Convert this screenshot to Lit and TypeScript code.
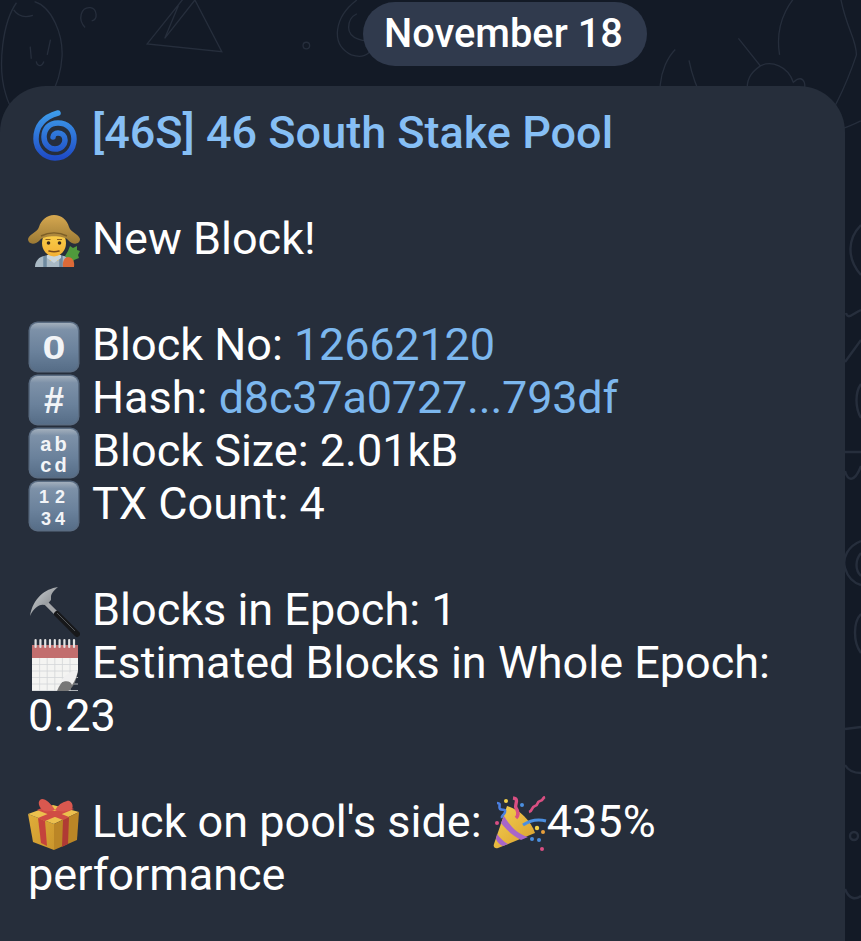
import { LitElement, html, css, svg } from "lit";
import { customElement } from "lit/decorators.js";

const cyclone = svg`<svg class="e" viewBox="0 0 52 52">
<defs><linearGradient id="cg" x1="0" y1="0" x2="0" y2="1"><stop offset="0" stop-color="#3d9bea"/><stop offset="1" stop-color="#1f4cc6"/></linearGradient></defs>
<path d="M30 4C16 8 8 17 8 30c0 11 9 19 19 19 11 0 19-8 19-19 0-10-7-16-16-16-9 0-14 6-14 14 0 7 5 12 11 12 6 0 10-4 10-9 0-4-3-7-7-7-3 0-5 2-5 4" fill="none" stroke="url(#cg)" stroke-width="5.500" stroke-linecap="round"/></svg>`;

const farmer = svg`<svg class="e" viewBox="0 0 52 52">
<defs><linearGradient id="hat" x1="0" y1="0" x2="0" y2="1"><stop offset="0" stop-color="#d6a850"/><stop offset="1" stop-color="#9b7a35"/></linearGradient>
<linearGradient id="fc" x1="0" y1="0" x2="0" y2="1"><stop offset="0" stop-color="#fbd54e"/><stop offset="1" stop-color="#f3b034"/></linearGradient></defs>
<path d="M7 52c0-6 4-10 9-11l10-2 10 2c5 1 7 5 7 11z" fill="#a9b9c4"/>
<path d="M17 41v11M33 41v11" stroke="#6f8aa0" stroke-width="3.500"/>
<path d="M20 40h12l-2 6h-8z" fill="#edb73e"/>
<path d="M19 43l7 5 7-5 0-3-14 0z" fill="#c9d5dc"/>
<ellipse cx="26" cy="28" rx="12" ry="13.500" fill="url(#fc)"/>
<circle cx="20.500" cy="28" r="1.800" fill="#3a2a1a"/><circle cx="31.500" cy="28" r="1.800" fill="#3a2a1a"/>
<path d="M17.500 24.500h5M29 24.500h5" stroke="#8a5f20" stroke-width="1.200"/>
<path d="M21 36q5 1.500 10 0" fill="none" stroke="#7a4a1a" stroke-width="1.600" stroke-linecap="round"/>
<path d="M0 24C2 18 9 18 11 12 13 5 19 0 26 0 34 0 39 5 41 12 43 18 50 18 52 24 52 30 44 30 40 25 36 20 16 20 12 25 8 30 0 30 0 24z" fill="url(#hat)"/>
<path d="M13 21c8-4 18-4 26 0" fill="none" stroke="#7d5f27" stroke-width="1.600"/>
<path d="M37 41l3-5 2-5 3 2 4-2 0 4 3 1-2 4 1 3-5 2-2 4z" fill="#4f9a3c"/>
<path d="M35 52c-1-6 2-10 5-10 4 0 7 4 6 10z" fill="#dc6a38"/></svg>`;

const cap = (inner: unknown) => svg`<svg class="e" viewBox="0 0 52 52">
<defs><linearGradient id="kc" x1="0" y1="0" x2="0" y2="1"><stop offset="0" stop-color="#a3afbc"/><stop offset=".14" stop-color="#7d91a8"/><stop offset=".6" stop-color="#6a819b"/><stop offset="1" stop-color="#566d87"/></linearGradient></defs>
<rect x=".5" y=".5" width="51" height="51" rx="9" fill="#5a6c82"/>
<rect x="2" y="2" width="48" height="48" rx="8" fill="url(#kc)"/>${inner}</svg>`;

const keyStyle = "font-family:'Liberation Sans',sans-serif;font-weight:700;fill:#f2f4f7";
const zero = cap(svg`<text x="0" y="0" transform="translate(26 38) scale(1.250 1)" text-anchor="middle" font-size="33" style=${keyStyle}>0</text>`);
const hash = cap(svg`<text x="26" y="39" text-anchor="middle" font-size="36" style=${keyStyle}>#</text>`);
const abcd = cap(svg`<text x="27" y="24" text-anchor="middle" font-size="20" letter-spacing="3" style=${keyStyle}>ab</text><text x="27" y="45" text-anchor="middle" font-size="20" letter-spacing="3" style=${keyStyle}>cd</text>`);
const nums = cap(svg`<text x="27" y="23" text-anchor="middle" font-size="18" letter-spacing="6" style=${keyStyle}>12</text><text x="27" y="45" text-anchor="middle" font-size="18" letter-spacing="4" style=${keyStyle}>34</text>`);

const pick = svg`<svg class="e" viewBox="0 0 52 52">
<defs><linearGradient id="pk" x1="0" y1="0" x2="1" y2="1"><stop offset="0" stop-color="#d2d6d9"/><stop offset="1" stop-color="#6f7377"/></linearGradient></defs>
<path d="M18 17L30 29" stroke="#a4a6a9" stroke-width="4.500"/>
<path d="M29 28L49 48" stroke="#17181a" stroke-width="6" stroke-linecap="round"/>
<path d="M29 27L47 45" stroke="#55575a" stroke-width="1"/>
<path d="M30 1C17 3 5 12 2 30c4-8 9-12 14-11l3-.5 4-4.500 0-3C23 8 26 4 30 1z" fill="url(#pk)"/></svg>`;

const rings = [0,1,2,3,4,5,6,7,8].map(i => svg`<rect x="${6.5 + i*4.8}" y="0" width="2.200" height="9" rx="1.100" fill="#e2e2e2"/>`);
const grid = [1,2,3,4,5].map(i => svg`<path d="M${4+i*7.600} 19V52M4 ${19+i*6.500}H50" stroke="#d3d6d8" stroke-width=".8"/>`);
const cal = svg`<svg class="e" viewBox="0 0 52 52">
<rect x="4" y="6" width="46" height="13" fill="#c26e6e"/>
<path d="M4 19h46v14L30 52H4z" fill="#f4f4f2"/>${grid}
<path d="M50 31c-9 3-17 11-21 21h11c5-3 9-11 10-21z" fill="#777"/>
<path d="M50 31c-8 1-15 6-18 13 6-3 11-2 12 2 3-4 5-9 6-15z" fill="#f0f0f0"/>${rings}</svg>`;

const gift = svg`<svg class="e" viewBox="0 0 52 52">
<defs><linearGradient id="gl" x1="0" y1="0" x2="1" y2="1"><stop offset="0" stop-color="#e0ad3a"/><stop offset="1" stop-color="#cb962c"/></linearGradient></defs>
<path d="M0 16l26 10v26L5 44z" fill="url(#gl)"/>
<path d="M0 16L25 7l26 7-25 12z" fill="#ecc04e"/>
<path d="M26 26l25-12-2 28-23 10z" fill="#bb8626"/>
<path d="M10 20l7 3 2 25-6-3z" fill="#c4433c"/>
<path d="M35 22l6-3-1 27-6 3z" fill="#b03a34"/>
<path d="M9 12L35 22l6-3L16 9z" fill="#d04c44"/>
<path d="M39 8L10 20l7 3 29-12z" fill="#d04c44"/>
<path d="M27 12C22 4 15 -1 12 2c-3 3 0 9 4 11 3 1 7 0 11-1 5 2 13 2 17-1 2-4-1-9-5-8-5 1-9 4-12 9z" fill="#d9584f"/></svg>`;

const party = svg`<svg class="e p" viewBox="0 0 56 56">
<defs><linearGradient id="cn" x1="0" y1="0" x2="1" y2="1"><stop offset="0" stop-color="#f4d052"/><stop offset="1" stop-color="#d99f2c"/></linearGradient></defs>
<path d="M14 10L1 48c-1 3 1 5 4 4l37-15c-4-12-16-24-28-27z" fill="url(#cn)"/>
<path d="M11 20c6 10 13 18 24 21l-7 3C18 39 12 32 8 27zM4 38c3 4 7 8 11 10l-5 2c-3-1-6-4-7-7z" fill="#a866c8"/>
<path d="M4 7c5 0 1 4 3 6s6-1 5 3-4 3-3 6" fill="none" stroke="#4b7fe0" stroke-width="2.600"/>
<path d="M20 2c7 1 1 7 3 10s3 7 0 10" fill="none" stroke="#d94f82" stroke-width="3.400"/>
<path d="M36 16c4-1 2-5 6-6s1-4 5-5 2-3 5-4" fill="none" stroke="#d94f82" stroke-width="2.800"/>
<path d="M30 29c6-4 15-6 23-4" fill="none" stroke="#4b8fe0" stroke-width="3"/>
<g><circle cx="13" cy="5" r="2" fill="#f2d04a"/><circle cx="29" cy="9" r="2" fill="#4b8fe0"/><circle cx="4" cy="27" r="2" fill="#d94f82"/>
<circle cx="44" cy="32" r="2.200" fill="#f2d04a"/><circle cx="50" cy="36" r="2" fill="#e9a03c"/><circle cx="39" cy="43" r="2" fill="#4b8fe0"/><circle cx="46" cy="44" r="2" fill="#4b8fe0"/><circle cx="49" cy="53" r="2" fill="#d94f82"/></g></svg>`;

@customElement("app-root")
export class AppRoot extends LitElement {
  static styles = css`
    :host { display: block; width: 861px; height: 941px; overflow: hidden; position: relative; background: #131a26;
      font-family: Roboto, sans-serif; color: #fff; }
    .doodles { position: absolute; inset: 0; width: 861px; height: 941px; fill: none; stroke: #262e3c; stroke-width: 2.400; }
    .page { position: relative; display: flex; flex-direction: column; padding-top: 2px; }
    .date { align-self: flex-start; margin-left: 363px; height: 64px; line-height: 63px; padding: 0 24px 0 21px; border-radius: 32px; background: #303a4d; font-size: 39.800px; font-weight: 500; }
    .bubble { margin: 20px 16px 0 0; height: 900px; box-sizing: border-box; padding: 20px 40px 0 28px;
      background: #262e3b; border-radius: 46px 46px 0 0; font-size: 45px; line-height: 53px; }
    .title { color: #86bff5; font-weight: 500; }
    .link { color: #7cb7ee; letter-spacing: -.2px; }
    .gap { height: 53px; }
    .e { display: inline-block; width: 52px; height: 52px; vertical-align: -1px; margin: -12px 12px -12px 0; }
    .p { width: 56px; height: 56px; margin-right: -2px; vertical-align: -3px; }
  `;

  render() {
    return html`
      <svg class="doodles" viewBox="0 0 861 941">
        <g transform="scale(.549)">
          <path d="M30 5C5 40-5 120 10 170c8 30 25 50 38 48 30-8 62-60 65-115 2-40-18-90-50-100"/>
          <path d="M25 18c8 12 22 14 35 10M55 85l2 22M92 72l-6 28M66 112c2 10 10 10 14 0M48 218c-12 10-18 18-8 28 -2 14-4 20-4 30"/>
          <path d="M155 50c-14-14-8-38 10-36 12 2 14 22 2 24"/>
          <path d="M340-10L268 80l136 14L355 0 300 70l25-60"/>
          <circle cx="558" cy="83" r="6"/><circle cx="355" cy="212" r="6"/>
          <path d="M135 260c20-40 60-90 100-94 30 0 16 60 0 94"/>
          <path d="M478 258c-20-30-14-80 10-88 22-6 24 40 4 50-10 2-10-16-2-20"/>
          <path d="M560 260c10-30 20-60 30-75 14 25 24 50 26 75"/>
          <path d="M650 0c-40 30-50 80-10 100 30 10 40-10 45-30-20 10-50 0-50-20 0-10 5-20 15-25"/>
          <path d="M815 200l20 60M880 190c20 20 40 50 50 70M840 200c0 20 10 30 20 20"/>
          <path d="M1045 195c-6 20 10 40 30 65M1135 205c-4 25-20 40-25 55M1045 210c30 8 60 6 70-5"/>
          <path d="M1230 90c-30 30-40 100-8 120 20 10 50 4 66-20M1255 110c10 50 40 110 70 140"/>
          <path d="M1345 70l40 50c20-10 50 0 60 30 20-20 30 10 10 30-6 30-40 60-70 50-20-4-30-10-36-24-14-2-12-20 0-24-14-14-2-30 12-22 0-20 10-30 24-40"/>
          <path d="M1400 195v30M1436 200l2 26"/>
          <path d="M1420 100c-10-60 20-110 60-130M1530 -10c10 60 30 80 30 110-20 60-50 120-70 140 30 0 50-6 78-20"/>
        </g>
        <path d="M861 225C848 238 846 258 861 275M845 362L861 340M861 310C852 314 848 320 846 313M861 384C855 392 855 408 861 418"/>
        <path d="M845 452H861M845 471C848 482 855 482 861 466M861 541C848 546 842 558 845 568 848 578 854 583 861 585M861 553C855 560 855 570 861 576"/>
        <path d="M861 614C853 622 853 642 861 653M845 729L861 727M845 765C849 772 855 773 861 773"/>
        <circle cx="854" cy="836" r="4"/>
        <path d="M845 889C849 899 855 900 861 896"/>
      </svg>
      <div class="page">
        <div class="date">November 18</div>
        <div class="bubble">
          <div class="title">${cyclone}[46S] 46 South Stake Pool</div>
          <div class="gap"></div>
          <div>${farmer}New Block!</div>
          <div class="gap"></div>
          <div>${zero}Block No: <span class="link">12662120</span></div>
          <div>${hash}Hash: <span class="link">d8c37a0727...793df</span></div>
          <div>${abcd}Block Size: 2.01kB</div>
          <div>${nums}TX Count: 4</div>
          <div class="gap"></div>
          <div>${pick}Blocks in Epoch: 1</div>
          <div>${cal}Estimated Blocks in Whole Epoch:</div>
          <div>0.23</div>
          <div class="gap"></div>
          <div>${gift}Luck on pool's side: ${party}<span>435%</span></div>
          <div>performance</div>
        </div>
      </div>`;
  }
}
